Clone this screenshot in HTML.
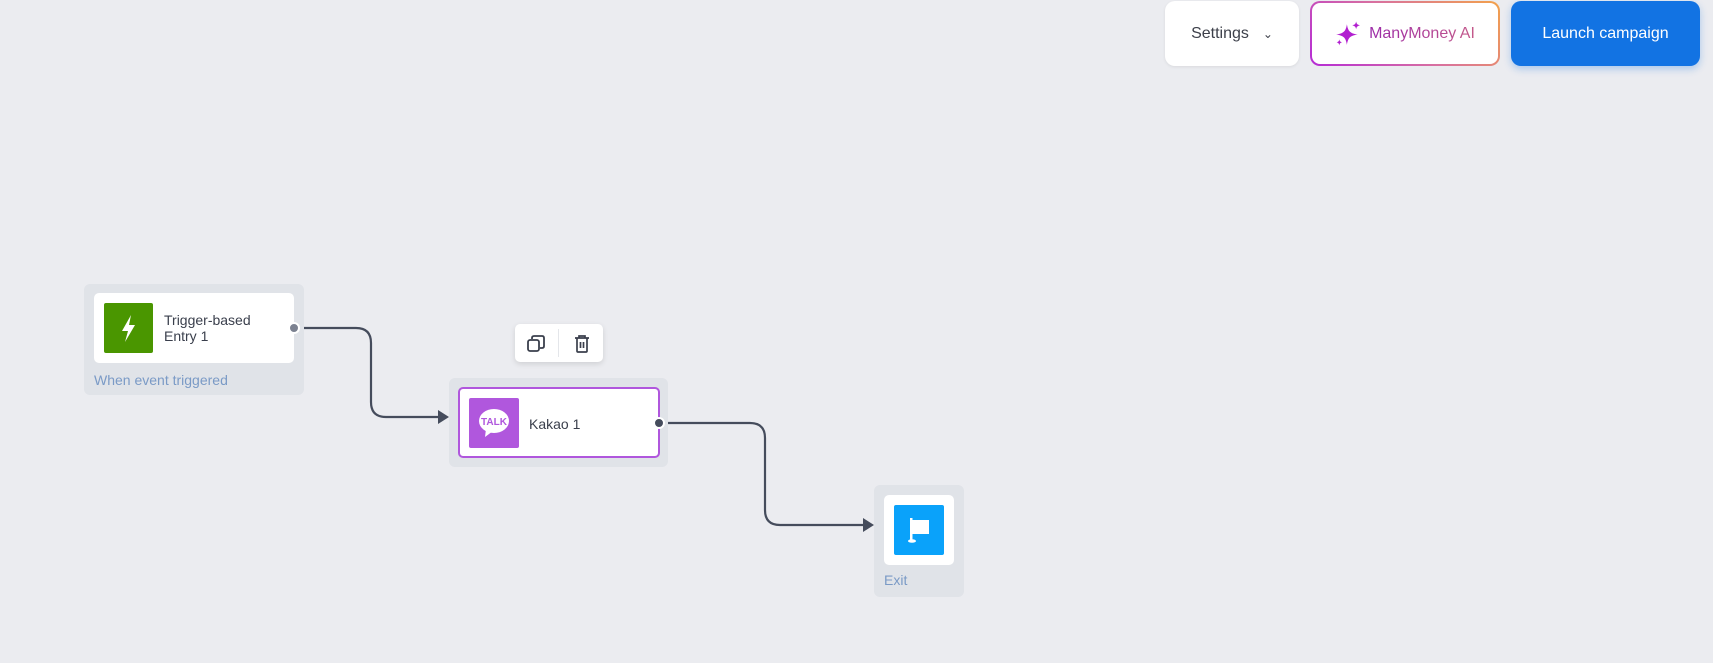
<!DOCTYPE html>
<html><head><style>
*{box-sizing:border-box;margin:0;padding:0}
body{width:1713px;height:663px;background:#ebecf0;font-family:"Liberation Sans",sans-serif;position:relative;overflow:hidden}
.abs{position:absolute}
.btn{position:absolute;top:1px;height:65px;border-radius:10px;display:flex;align-items:center;justify-content:center;font-size:16px}
.grp{position:absolute;background:#e0e3e8;border-radius:6px}
.card{position:absolute;background:#fff;border-radius:5px}
.t{position:absolute;font-size:14px;color:#3a3f4c;line-height:16px}
.lbl{position:absolute;font-size:14px;color:#7a9ac6}
</style></head><body>
<div class="btn" style="left:1165px;width:134px;background:#fff;color:#3d404a;box-shadow:0 1px 3px rgba(0,0,0,.08)">Settings<span style="margin-left:14px;font-size:12px">&#8964;</span></div>
<div class="btn" style="left:1310px;width:190px;background:linear-gradient(#fff,#fff) padding-box,linear-gradient(45deg,#b52bd6,#d870a0,#f3a24a) border-box;border:2px solid transparent">
<svg width="26" height="26" viewBox="0 0 24 24" style="margin-right:8px"><path d="M11 3 C12 9.5 14 11.5 21 12.5 C14 13.5 12 15.5 11 22 C10 15.5 8 13.5 1 12.5 C8 11.5 10 9.5 11 3Z" fill="#b21fd0"/><path d="M19.5 0.5 C20 2.8 20.6 3.4 23 4 C20.6 4.6 20 5.2 19.5 7.5 C19 5.2 18.4 4.6 16 4 C18.4 3.4 19 2.8 19.5 0.5Z" fill="#b21fd0"/><path d="M4 17 C4.4 18.8 4.9 19.3 6.5 19.7 C4.9 20.1 4.4 20.6 4 22.5 C3.6 20.6 3.1 20.1 1.5 19.7 C3.1 19.3 3.6 18.8 4 17Z" fill="#b21fd0"/></svg>
<span style="background:linear-gradient(90deg,#9b2aa8,#c45a8a);-webkit-background-clip:text;color:transparent">ManyMoney AI</span></div>
<div class="btn" style="left:1511px;width:189px;background:#1273e3;color:#fff;box-shadow:0 3px 8px rgba(18,115,227,.3)">Launch campaign</div>

<svg class="abs" style="left:0;top:0" width="1713" height="663">
<path d="M294 328 H356 Q371 328 371 343 V402 Q371 417 386 417 H440" stroke="#454c5c" stroke-width="2.2" fill="none"/>
<path d="M438 410 L449 417 L438 424Z" fill="#454c5c"/>
<path d="M659 423 H750 Q765 423 765 438 V510 Q765 525 780 525 H865" stroke="#454c5c" stroke-width="2.2" fill="none"/>
<path d="M863 518 L874 525 L863 532Z" fill="#454c5c"/>
</svg>

<div class="grp" style="left:84px;top:284px;width:220px;height:111px"></div>
<div class="card" style="left:94px;top:293px;width:200px;height:70px"></div>
<div class="abs" style="left:104px;top:303px;width:49px;height:50px;background:#4a9600;border-radius:2px">
<svg width="49" height="50" viewBox="0 0 49 50"><path d="M27 12 L18 28 H24 L21 39 L31 22 H25 Z" fill="#fff"/></svg></div>
<div class="t" style="left:164px;top:312px">Trigger-based<br>Entry 1</div>
<div class="abs" style="left:288px;top:322px;width:12px;height:12px;border-radius:50%;background:#7b8190;border:2px solid #fff"></div>
<div class="lbl" style="left:94px;top:372px">When event triggered</div>

<div class="abs" style="left:515px;top:324px;width:88px;height:38px;background:#fff;border-radius:5px;box-shadow:0 2px 6px rgba(0,0,0,.12)">
<div class="abs" style="left:43px;top:5px;width:1px;height:28px;background:#e4e6ea"></div>
<svg class="abs" style="left:10px;top:9px" width="22" height="22" viewBox="0 0 22 22"><rect x="3" y="7" width="11" height="11" rx="2" fill="none" stroke="#3a3f4c" stroke-width="1.8"/><path d="M7 6 V5 Q7 3 9 3 H17 Q19 3 19 5 V13 Q19 15 17 15 H15" fill="none" stroke="#3a3f4c" stroke-width="1.8"/></svg>
<svg class="abs" style="left:56px;top:9px" width="22" height="22" viewBox="0 0 22 22"><path d="M4 5 H18 M8 5 V3 H14 V5 M6 5 V18 Q6 19 7 19 H15 Q16 19 16 18 V5 M9.5 9 V15 M12.5 9 V15" fill="none" stroke="#3a3f4c" stroke-width="1.7"/></svg>
</div>

<div class="grp" style="left:449px;top:378px;width:219px;height:89px"></div>
<div class="card" style="left:458px;top:387px;width:202px;height:71px;border:2px solid #b057dd"></div>
<div class="abs" style="left:469px;top:398px;width:50px;height:50px;background:#b057dd;border-radius:2px">
<svg width="50" height="50" viewBox="0 0 50 50"><ellipse cx="25" cy="23" rx="15" ry="12" fill="#fff"/><path d="M17 31 L16 39 L24 33Z" fill="#fff"/><text x="25" y="27" text-anchor="middle" font-family="Liberation Sans" font-weight="bold" font-size="10" fill="#b057dd">TALK</text></svg></div>
<div class="t" style="left:529px;top:416px">Kakao 1</div>
<div class="abs" style="left:653px;top:417px;width:12px;height:12px;border-radius:50%;background:#454c5c;border:2px solid #fff"></div>

<div class="grp" style="left:874px;top:485px;width:90px;height:112px"></div>
<div class="card" style="left:884px;top:495px;width:70px;height:70px"></div>
<div class="abs" style="left:894px;top:505px;width:50px;height:50px;background:#0aa2fa;border-radius:2px">
<svg width="50" height="50" viewBox="0 0 50 50"><rect x="16" y="13" width="2.5" height="22" fill="#fff"/><rect x="18" y="15" width="17" height="14" fill="#fff"/><ellipse cx="18" cy="36" rx="4" ry="1.8" fill="#fff"/></svg></div>
<div class="lbl" style="left:884px;top:572px">Exit</div>
</body></html>
